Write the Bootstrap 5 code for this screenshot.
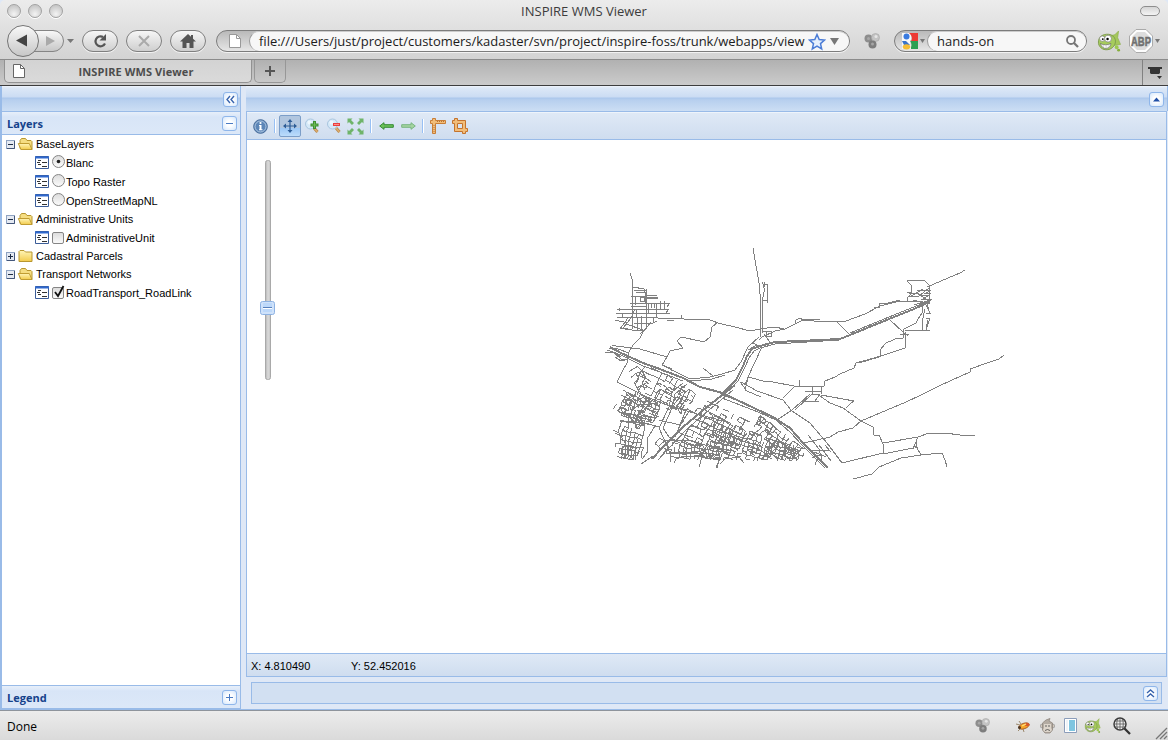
<!DOCTYPE html>
<html lang="en">
<head>
<meta charset="utf-8">
<title>INSPIRE WMS Viewer</title>
<link rel="stylesheet" href="https://cdn.jsdelivr.net/npm/bootstrap@5.3.0/dist/css/bootstrap.min.css">
<style>
html,body{height:740px;overflow:hidden}
body{font-family:"Liberation Sans",Arial,sans-serif;font-size:11px;line-height:14px;color:#000;background:#dfe8f6}
svg{display:block;flex:none}
.win{width:1168px;height:740px}
.chrome{height:60px;background:linear-gradient(#ececec,#d3d3d3);font-family:"Open Sans","Noto Sans",sans-serif;border-bottom:1px solid #8b8b8b;border-radius:5px 5px 0 0}
.titlerow{height:22px;font-size:13px;color:#3c3c3c;padding:0 8px}
.lamp{width:14px;height:14px;border-radius:50%;border:1px solid #a2a2a2;background:radial-gradient(circle at 50% 75%,#f4f4f4,#c9c9c9 75%);box-shadow:0 1px 0 #fff}
.pillbtn{width:20px;height:10px;border:1px solid #8d8d8d;border-radius:5px;background:linear-gradient(#d5d5d5,#f4f4f4)}
.navrow{height:38px;padding-left:6px}
.rbtn{width:36px;height:22px;border:1px solid #7f7f7f;border-radius:11px;background:linear-gradient(#f6f6f6,#cfcfcf);box-shadow:0 1px 0 #f2f2f2;margin-right:8px}
.field{height:22px;border:1px solid #7c7c7c;border-radius:11px;background:linear-gradient(#b9b9b9,#e6e6e6);box-shadow:0 1px 0 #f2f2f2;font-size:13px;color:#1c1c1c}
.field .inner{height:20px;border-radius:10px;background:#f7f7f7;border-left:1px solid #999;border-top:1px solid #ccc;padding-left:9px;white-space:nowrap;overflow:hidden}
.field .inner span{padding-bottom:2px}
.addr{font-size:12.980px}
.tabs{height:25px;background:linear-gradient(#b1b1b1,#cbcbcb);font-family:"Open Sans","Noto Sans",sans-serif;padding-left:4px}
.tabbox{width:248px;height:23px;background:linear-gradient(#d3d3d3,#dadada);border:1px solid #929292;border-top:0;border-radius:0 0 5px 5px;font-size:11px;font-weight:700;color:#4d4d4d;letter-spacing:.1px}
.plusbox{width:32px;height:23px;border:1px solid #979797;border-top:0;border-radius:0 0 5px 5px;margin-left:2px}
.tablist{width:26px;border-left:1px solid #818181}
.page-area{height:624px;border-bottom:1px solid #99bbe8}
.west{width:241px;border-left:2px solid #99bbe8;border-right:1px solid #99bbe8}
.strip{height:25px;background:linear-gradient(#f0f5fc 0,#dce8f7 2px,#cbdcf3 11px,#abc7ec 12px,#b7cfee 14px,#ccdef4);padding:2px 3px 0 0}
.phead{height:24px;background:linear-gradient(#e7effa,#d8e5f7 5px,#dce8f8);border-top:1px solid #99bbe8;border-bottom:1px solid #99bbe8;color:#15428b;font:bold 11px "Open Sans","Noto Sans",sans-serif;padding:1px 3px 0 5px}
.tool{width:15px;height:15px;border:1px solid #8fb6ea;border-radius:3px;background:radial-gradient(#fff 30%,#d4e6fb)}
.tree{background:#fff}
.trow{font-size:11px;height:18px;padding-left:3px;white-space:nowrap}
.trow svg+svg{margin:0 2px 0 -1px}
.leaf{height:19px;padding-left:33px}
.knob{width:13px;height:13px;border:1px solid #858585;background:linear-gradient(#ddd,#fafafa);margin:0 1px 2px 3px}
.boxy{width:12px;height:12px;border-radius:2px;margin:0 2px 0 3px}
.east{margin-left:5px;width:922px}
.mapbox{border:1px solid #99bbe8;border-bottom:0;width:921px}
.tbar{height:28px;background:linear-gradient(#dfe9f6,#cfddef);border-bottom:1px solid #99bbe8;border-top:1px solid #eef4fb;padding-left:6px}
.vsep{width:2px;height:14px;background:linear-gradient(90deg,#98c0f4 50%,#fff 50%)}
.press{width:22px;height:22px;border:1px solid #7c9ec8;border-radius:2px;background:linear-gradient(#b1c6df 58%,#9cc7f5 60%,#bcdcfb)}
.coords{height:24px;border-top:1px solid #99bbe8;border-bottom:1px solid #99bbe8;background:linear-gradient(#dfe9f6,#cfddef);padding:2px 0 0 4px;width:100%}
.foldbar{margin:5px 0 0 5px;width:911px;height:22px;border:1px solid #99bbe8;background:#d2e0f2;padding-right:3px}
.done{height:30px;background:linear-gradient(#ececec,#dadada);border-top:1px solid #8e949c;font:12px "Open Sans","Noto Sans",sans-serif;padding-left:7px}
.roads{fill:none;stroke:#808080;stroke-width:1;shape-rendering:crispEdges}
</style>
</head>
<body>
<svg width="0" height="0" class="position-absolute">
<defs>
<linearGradient id="gBtn" x2="0" y2="1"><stop stop-color="#f9f9f9"/><stop offset="1" stop-color="#c6c6c6"/></linearGradient>
<linearGradient id="gFold" x2="0" y2="1"><stop stop-color="#fff5b8"/><stop offset="1" stop-color="#f2cb4c"/></linearGradient>
<linearGradient id="gTrack"><stop stop-color="#b5b5b5"/><stop offset=".5" stop-color="#dadada"/><stop offset="1" stop-color="#c6c6c6"/></linearGradient>
<symbol id="minus" viewBox="0 0 13 18"><rect x="1.500" y="5.500" width="8" height="8" fill="#e4e9f2" stroke="#8fa3c2"/><path d="M2 13.500h7.500V6" stroke="#43567a" fill="none"/><path d="M3 9.500h5" stroke="#1e2d46" fill="none"/></symbol>
<symbol id="plus" viewBox="0 0 13 18"><use href="#minus"/><path d="M5.500 7v5" stroke="#1e2d46" fill="none"/></symbol>
<symbol id="fopen" viewBox="0 0 16 16"><path d="M2.500 12.500V4.500l1.500-2h4l1.500 2h4l1 1v8H4z" fill="#f5dd82" stroke="#b8962f"/><path d="M3.500 13.500L.8 7.500h11l2.700 6z" fill="url(#gFold)" stroke="#c09c32"/></symbol>
<symbol id="fshut" viewBox="0 0 16 16"><path d="M1.500 13.500V3.500l1-1h4l1.500 1.500h6.500v9.500z" fill="url(#gFold)" stroke="#b8962f"/></symbol>
<symbol id="layer" viewBox="0 0 14 13"><path d="M.5.5h13v12H.5z" fill="#fff" stroke="#3b5d98"/><path d="M0 1.500h14" stroke="#2f68cf" stroke-width="2"/><path d="M3 4.500h3m1 2h5M2 6.500h3M3 8.500h3m1 2h5" stroke="#333"/></symbol>
<symbol id="molecule" viewBox="0 0 16 16"><circle cx="4.500" cy="5.500" r="4" fill="#8d8d8d"/><circle cx="11.500" cy="4.500" r="4" fill="#c4c4c4" stroke="#a5a5a5" stroke-width=".6"/><circle cx="8.500" cy="11.500" r="4" fill="#7d7d7d"/><circle cx="12" cy="3.500" r="1.500" fill="#e6e6e6"/><circle cx="4.500" cy="5.500" r="1.500" fill="#a8a8a8"/><circle cx="8.500" cy="11" r="1.500" fill="#a5a5a5"/></symbol>
<symbol id="fish" viewBox="0 0 24 24"><path d="M13 6l5-1 4-4-1 7 3 7-6 1-4-1z" fill="#a5c85c" stroke="#8db04c" stroke-width=".7"/><path d="M1 14C0 6 8 3 14 5c7 3 6 12-1 15-6 2-11-1-12-6z" fill="#a6cc5c" stroke="#7f9c4f"/><path d="M3 14c3 2 8 2 11 0 0 6-9 8-11 0z" fill="#fafafa" stroke="#666" stroke-width=".7"/><path d="M6 15v3m3-2v3m3-4v3" stroke="#aaa" stroke-width=".5"/><circle cx="5" cy="9" r="2.800" fill="#fff" stroke="#777" stroke-width=".7"/><circle cx="11" cy="9" r="3.600" fill="#fff" stroke="#777" stroke-width=".7"/><circle cx="5.500" cy="9.500" r="1"/><circle cx="10.500" cy="9.500" r="1.300"/><circle cx="20" cy="18" r="2" fill="#9dca4e"/><circle cx="22" cy="21" r="1.500" fill="#86ae3c"/></symbol>
<symbol id="lens" viewBox="0 0 16 16"><path d="M9 10l3.500 4" stroke="#b98a50" stroke-width="3"/><path d="M9 10l3.500 4" stroke="#e0b070" stroke-width="1.200"/><circle cx="5.500" cy="6" r="5" fill="#d6e9f8" stroke="#a9c5de"/><circle cx="4.500" cy="4.500" r="2" fill="#eef7fd"/></symbol>
<symbol id="arrows4" viewBox="0 0 17 17"><path d="M.5 .5h5L4 2l3 3-2 2-3-3-1.500 1.500zM16.500.5v5L15 4l-3 3-2-2 3-3L11.500.5zM.5 16.500v-5L2 13l3-3 2 2-3 3 1.500 1.500zM16.500 16.500h-5L13 15l-3-3 2-2 3 3 1.500-1.500z" fill="#6fb46a"/></symbol>
</defs>
</svg>

<div class="win d-flex flex-column">
<header class="chrome">
  <div class="titlerow d-flex align-items-center">
    <div class="d-flex" style="gap:7px;margin-left:-1px"><span class="lamp"></span><span class="lamp"></span><span class="lamp"></span></div>
    <div class="flex-fill text-center" style="padding-left:2px">INSPIRE WMS Viewer</div>
    <span style="width:37px"></span><span class="pillbtn"></span>
  </div>
  <div class="navrow d-flex align-items-center">
    <svg width="76" height="34" viewBox="0 0 76 34"><path d="M20 6.500h27a10.500 10.500 0 0 1 0 21H20z" fill="url(#gBtn)" stroke="#858585"/><circle cx="17" cy="17" r="15.500" fill="url(#gBtn)" stroke="#747474"/><path d="M10 16.500l11-6v12z" fill="#444"/><path d="M40 12v10l9-5z" fill="#aaa"/><path d="M61 15h7l-3.500 4z" fill="#777"/></svg>
    <div class="rbtn d-flex justify-content-center align-items-center"><svg width="16" height="16" viewBox="0 0 16 16"><path d="M11 4A5 5 0 1 0 13 10.500" fill="none" stroke="#555" stroke-width="2.200"/><path d="M14 1v6.500H7.500z" fill="#555"/></svg></div>
    <div class="rbtn d-flex justify-content-center align-items-center"><svg width="14" height="14" viewBox="0 0 14 14"><path d="M2 2l10 10M12 2L2 12" stroke="#aaa" stroke-width="2"/></svg></div>
    <div class="rbtn d-flex justify-content-center align-items-center"><svg width="16" height="14" viewBox="0 0 16 14"><path d="M8 0L0 7.500h2.500V14h4V9h3v5h4V7.500H16l-3-2.800V1h-2v1.800z" fill="#555"/></svg></div>
    <div class="field d-flex" style="width:634px;margin-left:2px">
      <svg width="32" height="20" viewBox="0 0 32 20"><path d="M12.500 3.500h7l4 4v9h-11z" fill="#fff" stroke="#999"/><path d="M19.500 3.500v4h4" fill="none" stroke="#999"/></svg>
      <div class="inner d-flex align-items-center flex-fill"><span class="addr">file:///Users/just/project/customers/kadaster/svn/project/inspire-foss/trunk/webapps/view</span>
        <svg class="ms-auto" width="41" height="18" viewBox="0 0 41 18"><path d="M9 1.500l2.200 5 5.300.5-4 3.600 1.200 5.400L9 13.200 4.300 16l1.200-5.400-4-3.600 5.300-.5z" fill="#e6f0fd" stroke="#4c7dd6" stroke-width="1.500"/><path d="M22 5h9l-4.500 7z" fill="#777"/></svg></div>
    </div>
    <svg width="16" height="16" style="margin:0 14px"><use href="#molecule"/></svg>
    <div class="field d-flex" style="width:193px">
      <svg width="32" height="20" viewBox="0 0 32 20"><path d="M7 2h9v7H7z" fill="#f8f8f8"/><path d="M14 2h9v8h-7c2-3 1-5-2-8z" fill="#ec3a35"/><path d="M15 10h8v8h-8c2-3 2-5 0-8z" fill="#2ca053"/><path d="M7 9h8l1 9H7z" fill="#f8f8f8"/><circle cx="11.500" cy="5.500" r="3" fill="#3a7be0"/><path d="M7 10l4 0 4 4H9z" fill="#3b74c9"/><ellipse cx="11.500" cy="15.800" rx="3.800" ry="2.600" fill="#f6bd35"/><path d="M25 8h5l-2.500 4z" fill="#777"/></svg>
      <div class="inner d-flex align-items-center flex-fill"><span>hands-on</span>
        <svg class="ms-auto" width="21" height="16" viewBox="0 0 21 16"><circle cx="6" cy="6" r="4" fill="none" stroke="#777" stroke-width="1.800"/><path d="M9 9l4 4" stroke="#777" stroke-width="2.300"/></svg></div>
    </div>
    <svg width="24" height="23" style="margin:0 8px 0 10px"><use href="#fish"/></svg>
    <svg width="34" height="24" viewBox="0 0 34 24"><path d="M7 .5h10L23.500 7v10L17 23.500H7L.5 17V7z" fill="#fdfdfd" stroke="#aaa"/><path d="M8 3h8l5 5v8l-5 5H8l-5-5V8z" fill="#ddd"/><text x="2" y="16.500" font-family="Liberation Sans" font-weight="bold" font-size="12.500" fill="#707070" stroke="#707070" stroke-width=".5" textLength="20" lengthAdjust="spacingAndGlyphs">ABP</text><path d="M26 10h5l-2.500 4z" fill="#777"/></svg>
  </div>
</header>
<div class="tabs d-flex">
  <div class="tabbox d-flex align-items-center"><svg width="24" height="18" viewBox="0 0 24 18"><path d="M8.500 2.500h7l4 4v9h-11z" fill="#fff" stroke="#666"/><path d="M15.500 2.500v4h4" fill="none" stroke="#666"/></svg><span class="flex-fill text-center" style="padding:1px 8px 0 0">INSPIRE WMS Viewer</span></div>
  <div class="plusbox d-flex justify-content-center align-items-center"><svg width="12" height="12"><path d="M1 6h10M6 1v10" stroke="#555" stroke-width="2"/></svg></div>
  <div class="tablist ms-auto"><svg width="24" height="24"><path d="M5 7h14v2h-2v4l-1 1H8l-1-1V9H5z" fill="#333"/><path d="M14 16h5l-2.500 3z" fill="#333"/></svg></div>
</div>
<div style="height:1px;background:#3d3d3d"></div>

<main class="page-area d-flex">
  <aside class="west d-flex flex-column">
    <div class="strip d-flex align-items-center justify-content-end" style="padding-right:2px"><div class="tool"><svg width="13" height="13"><path d="M6 3L3 6.500 6 10M10 3L7 6.500 10 10" fill="none" stroke="#3763ad" stroke-width="1.400"/></svg></div></div>
    <div class="phead d-flex align-items-center justify-content-between"><span>Layers</span><div class="tool"><svg width="13" height="13"><path d="M3 6.500h7" stroke="#4a7bc4"/></svg></div></div>
    <div class="tree flex-fill">
      <div class="trow d-flex align-items-center"><svg width="13" height="18"><use href="#minus"/></svg><svg width="17" height="16"><use href="#fopen"/></svg><span>BaseLayers</span></div>
      <div class="trow leaf d-flex align-items-center"><svg width="14" height="13"><use href="#layer"/></svg><span class="knob rounded-circle"><svg width="11" height="11"><circle cx="5.500" cy="5.500" r="1.800" fill="#222"/></svg></span><span>Blanc</span></div>
      <div class="trow leaf d-flex align-items-center"><svg width="14" height="13"><use href="#layer"/></svg><span class="knob rounded-circle"></span><span>Topo Raster</span></div>
      <div class="trow leaf d-flex align-items-center"><svg width="14" height="13"><use href="#layer"/></svg><span class="knob rounded-circle"></span><span>OpenStreetMapNL</span></div>
      <div class="trow d-flex align-items-center"><svg width="13" height="18"><use href="#minus"/></svg><svg width="17" height="16"><use href="#fopen"/></svg><span>Administrative Units</span></div>
      <div class="trow leaf d-flex align-items-center"><svg width="14" height="13"><use href="#layer"/></svg><span class="knob boxy"></span><span>AdministrativeUnit</span></div>
      <div class="trow d-flex align-items-center"><svg width="13" height="18"><use href="#plus"/></svg><svg width="17" height="16"><use href="#fshut"/></svg><span>Cadastral Parcels</span></div>
      <div class="trow d-flex align-items-center"><svg width="13" height="18"><use href="#minus"/></svg><svg width="17" height="16"><use href="#fopen"/></svg><span>Transport Networks</span></div>
      <div class="trow leaf d-flex align-items-center"><svg width="14" height="13"><use href="#layer"/></svg><span class="knob boxy"><svg width="12" height="12" viewBox="0 0 12 12" overflow="visible"><path d="M2 4l3 4L10.500-2" fill="none" stroke="#111" stroke-width="1.800"/></svg></span><span>RoadTransport_RoadLink</span></div>
    </div>
    <div class="phead d-flex align-items-center justify-content-between"><span>Legend</span><div class="tool"><svg width="13" height="13"><path d="M3 6.500h7M6.500 3v7" stroke="#4a7bc4"/></svg></div></div>
  </aside>

  <section class="east d-flex flex-column">
    <div class="strip d-flex align-items-center justify-content-end" style="border-right:1px solid #99bbe8"><div class="tool"><svg width="13" height="13"><path d="M3 8.500l3.500-4 3.500 4z" fill="#1f4fa8"/></svg></div></div>
    <div class="mapbox d-flex flex-column">
      <div class="tbar d-flex align-items-center">
        <svg width="15" height="15" viewBox="0 0 15 15"><circle cx="7.500" cy="7.500" r="6.800" fill="#5c86b8" stroke="#456a99"/><circle cx="7.500" cy="7.500" r="5.500" fill="none" stroke="#c3d6ea" stroke-width=".8"/><path d="M6.500 6h2v5h-2zM6 6h2v1H6zM6 10.200h3.500v1H6z" fill="#fff"/><circle cx="7.500" cy="4" r="1.100" fill="#fff"/></svg>
        <div class="vsep" style="margin:0 4px 0 6px"></div>
        <div class="press d-flex align-items-center justify-content-center" style="margin-left:-1px"><svg width="14" height="14" viewBox="0 0 14 14"><path d="M7 2v10M2 7h10" stroke="#2d5c96" stroke-width="1.200"/><path d="M7 0l2.500 3h-5zM7 14l2.500-3h-5zM0 7l3-2.500v5zM14 7l-3-2.500v5z" fill="#2d5c96"/></svg></div>
        <svg width="16" height="16" viewBox="0 0 16 16" style="margin-left:4px"><use href="#lens"/><path d="M9.500 3v8M5.500 7h8" stroke="#3f8f33" stroke-width="3"/><path d="M9.500 4v6M6.500 7h6" stroke="#6cbb55" stroke-width="1"/></svg>
        <svg width="16" height="16" viewBox="0 0 16 16" style="margin-left:6px"><use href="#lens"/><path d="M6 6.500h7" stroke="#ea3f3f" stroke-width="3"/><path d="M7 6.500h5" stroke="#ff8f88"/></svg>
        <svg width="17" height="17" style="margin-left:4px"><use href="#arrows4"/></svg>
        <div class="vsep" style="margin:0 7px 0 6px"></div>
        <svg width="15" height="8" viewBox="0 0 15 8"><path d="M.7 4L5 .7v2h9.300v2.600H5v2z" fill="#6ac058" stroke="#338a32"/></svg>
        <svg width="15" height="8" viewBox="0 0 15 8" style="margin-left:7px"><path d="M14.300 4L10 .7v2H.7v2.600H10v2z" fill="#a4d4a0" stroke="#78b581"/></svg>
        <div class="vsep" style="margin:0 6px"></div>
        <svg width="16" height="16" viewBox="0 0 16 16"><path d="M2.500.5h3v2h10v3h-10v10h-3v-10h-2v-3h2z" fill="#f1bd79" stroke="#c87e37"/><path d="M7 3.500h8M4 7v8" stroke="#b87333" stroke-dasharray="1 1"/></svg>
        <svg width="16" height="16" viewBox="0 0 16 16" style="margin-left:6px"><path d="M2.500.5h3v2h8v8h2v3h-2v2h-3v-2h-8v-8h-2v-3h2zM5.500 5.500v5h5v-5z" fill="#f1bd79" stroke="#c4732d" fill-rule="evenodd"/></svg>
      </div>
      <svg width="919" height="513" viewBox="247 140 919 513" style="background:#fff">
        <rect x="265.500" y="160.500" width="5" height="219" rx="2" fill="url(#gTrack)" stroke="#a9a9a9"/>
        <rect x="260.500" y="301.500" width="14" height="13" rx="2" fill="#cfe2fa" stroke="#8db2e3"/><rect x="263" y="303" width="9" height="9" fill="#bcd8fa"/><path d="M263 307.500h9" stroke="#5680bd"/><path d="M263 308.500h9" stroke="#fff"/>
        <g class="roads" id="streets"></g>
        <g class="roads">
        <path d="M753 248L759 283 760.500 300V337M762.500 282l2 8-2 9V333M763 284.500h4.500V303M762 300.500h6M764 282v5"/>
        <path d="M640 317L670 318.700 697 319.300 710 320 719 323.300 735 327 750 331 760 329 775 327 784 329M682 315l-1 4M667 320h7"/>
        <path d="M718 322L712 327 710 337 704 342 700 341 681 337 677 341 683 348 670 351 667 357 662 365 672 369 671 371"/>
        <path d="M651 322L643 332 640 338 633 345 629 352 627 363 622 372 617 382 627 387 647 397 667 405 690 412 712 418 730 423"/>
        <path d="M612 345L616 346 640 349 667 357M605 352h8l8 5M609 348l9 1 11 4M613 352l8 7h7l-7 2-6-4"/>
        <path stroke-width="2" d="M610 347L621 353 643 363 657 368 683 378 700 387 723 393 737 400"/>
        <path d="M607 350L621 355 643 366 657 371 683 381"/>
        <path d="M663 365L672 370 690 379 710 377 722 374 735 370 741 362 748 347 759 337M690 381L712 379 725 375"/>
        <path stroke-width="2" d="M929 302L914 309 889 319 850 335 840 339 800 341 775 342 760 346 752 349 747 356 743 366 736 380 722 394"/>
        <path d="M931 300L889 317 850 333M839 340L775 344 760 348 754 351 749 358 745 367 738 381 724 395M757 345L748 350"/>
        <path d="M759 340l3-3 13-6 10-2 18-9 22 2 21-1 19-7 15-8 20-5h20l8 3M803 320l-3-2-4 2-1 4M803 319l17 1M772 331h-9M766 332v4h5v-4M764 334l8 11M753 343l6 3 11-3"/>
        <path d="M837 322L850 335M889 319L903 332 908 336M874 307h5v-3l9-1 12-3"/>
        <path d="M907 281l17-1 5 5v18M907 281l5 5-1 8-3 3-1 4M965 270l-5 3-12 5-21 9M923 289l-12 7h8l10-8M909 293h8l13 9M907 292h5M917 290h14l-5 3h5M919 295h10l-6 4h9M913 300l17 4M914 305l13-4M921 305l5-3 3 7M925 303l5 10"/>
        <path d="M922 305v8l-4 6-2 4-12 6-1 9h-6l-4 2-7 3-6 7v7M905 330h25M925 309l-3 13 1 8M926 318h4l-4 12M928 320l-2 9M926 313h5M905 332v16l-24 8-25 7-2 5-14 6-5 3-10 4-1 5M879 357l-20 6M900 334h9"/>
        <path d="M1004 355l-5 4-9 3-20 7v3l-29 13-20 10-15 7-45 19"/>
        <path d="M762 347L755 362 748 377 745 391M748 377l19 5 1-1 31 6M799 380v6h25M812 386v8l-17 16M821 386v8M748 379l-3 5M741 382l16 9 26 9 8 10M783 398l12-12M807 396l-4 5h16M812 394h8l-5 7M821 395l33 6-3 2-5 5M805 391h17"/>
        <path d="M740 382l7 9 14 6M703 368l10 8"/>
        <path stroke-width="2" d="M720 393l17 7 36 17 17 11 13 15 25 25"/>
        <path d="M722 398l36 14 18 8 14 12 13 14 22 22M777 420l15-10 18-16M792 411l18 12 17 20 15 20 41-10M803 443l14-3 13-3 8-5 15-4 8-7M811 450l19 1-5-6M808 435l11 14 3 11M814 452l12 5M819 445l12 16M812 458l10-4M815 465l3-8"/>
        <path d="M820 396l10 7 13 5 18 13 12 6 1 8h5l4 9v10l30-6M883 443l35-6 11-4h16l15 2h15M913 449l5-12M916 440l1 8 4 7M913 446l5 2M853 479l19-5 7-7 22-9 20-3 21-2 3 7 2 7"/>
        <path stroke-width="2" d="M735 385L707 407 683 427 663 447 652 459"/>
        <path d="M733 390L709 410 687 429 668 449 658 460M683 383l-11 9-3 15-10 21 4 9 7 16 1 9M687 384l-12 10-3 14-9 20 6 9 9 5"/>
        <path d="M613 430l6 3 6 10v10M615 433l8 4M620 421l25 2 14 4M655 426l-8 13 1 12-5 7"/>
        <path d="M667 405l19 5-8 20M690 410l-10 15-21-5M670 453l27-1 18-4 17 3M663 440l30 1 37 12M669 454l40-1"/>
        <path d="M674 463l2-4 8-3 18 1 17 3-3 8M702 457l-3 10M705 458l14 1-2 9M720 464l5-5 14-2 5 6M641 464l12-8"/>
        <path d="M630 273l2 6v24M633 287l11 2 1 3M634 290h12v5M636 292h9v4M631 296h14M635 297v8M646 289v40M632 303v26M633 296h12v7M640 297h4v4h-4zM646 295h11M646 297h12M646 298.500h12M646 303h24l-3 4M617 309h52l-3 4-7 1M616 313h54M617 317h40M615 320l13 3M630 303h16M631 306h15M648 303v10m3-10v5m3-5v5m2-5v14m4-16v8m4-8v8m-28 0v8h20M635 309l-4 9-8 10 9 2 12 1M628 318l-8 11M622 313v4m-3-9v3M637 317v14M641 316v15M634 323h19l4-2M648 326l-8 8M626 324l17 6M653 317v6M620 328l10 2"/>
        </g>
      </svg>
      <div class="coords d-flex align-items-center"><span style="width:100px">X: 4.810490</span><span>Y: 52.452016</span></div>
    </div>
    <div class="foldbar d-flex align-items-center justify-content-end"><div class="tool"><svg width="13" height="13"><path d="M3 6l3.500-3L10 6M3 10l3.500-3 3.500 3" fill="none" stroke="#3763ad" stroke-width="1.400"/></svg></div></div>
  </section>
</main>
<footer class="done d-flex align-items-center"><span style="padding-top:1px">Done</span>
  <svg class="ms-auto" width="15" height="15" style="margin-right:25px" viewBox="0 0 16 16"><use href="#molecule"/></svg>
  <svg width="17" height="14" viewBox="0 0 17 14" style="margin-right:8px"><path d="M1 5l4 1M4 2l2 3M3 12l3-3M9 13l-1-3" stroke="#8a7452" stroke-width=".8"/><ellipse cx="9" cy="7" rx="5.500" ry="2.700" transform="rotate(-20 9 7)" fill="#f6a52a" stroke="#a3541c" stroke-width=".8"/><ellipse cx="12" cy="5.500" rx="2.500" ry="1.500" fill="#d8552a"/><path d="M7 7l4-2" stroke="#ffe27a" stroke-width="1.300"/><circle cx="4.500" cy="8.500" r="1.500" fill="#4a3524"/></svg>
  <svg width="15" height="16" viewBox="0 0 15 16" style="margin-right:9px"><circle cx="2" cy="8" r="1.800" fill="#d3c9be" stroke="#999" stroke-width=".8"/><circle cx="13" cy="8" r="1.800" fill="#d3c9be" stroke="#999" stroke-width=".8"/><path d="M2.500 5L6 2 10 .5 9 3l3.500 2v7L10 15H5l-2.500-3z" fill="#b3aba2" stroke="#8f877e" stroke-width=".8"/><path d="M4 6h7v4l1 2-2 2H5l-2-2 1-2z" fill="#ddd5cb"/><path d="M6 7v2m3-2v2M5 12.500l2.500-1 2.500 1" stroke="#555" stroke-width=".9" fill="none"/></svg>
  <svg width="13" height="15" viewBox="0 0 13 15" style="margin-right:7px"><path d="M.5.500h12v14H.5z" fill="#fff" stroke="#8b9dba"/><path d="M5 2h6v11H5z" fill="#7fc5e0"/><path d="M2 2h2v11H2z" fill="#eef3f8"/></svg>
  <svg width="17" height="16" style="margin-right:12px" viewBox="0 0 24 24"><use href="#fish"/></svg>
  <svg width="18" height="18" viewBox="0 0 18 18" style="margin-right:24px"><path d="M11 11l6 6" stroke="#333" stroke-width="2.300"/><circle cx="7" cy="7" r="6" fill="#eee" stroke="#3c3c3c" stroke-width="1.500"/><path d="M1 7h12M7 1v12M2 4h10M2 10h10M4.500 2c-1 3-1 7 0 10M9.500 2c1 3 1 7 0 10" fill="none" stroke="#555" stroke-width=".8"/></svg>
  <svg width="13" height="13" class="align-self-end"><path d="M1 12L12 1M5 12l7-7M9 12l3-3" stroke="#777" stroke-width="1.300"/></svg>
</footer>
</div>
<script src="https://cdn.jsdelivr.net/npm/bootstrap@5.3.0/dist/js/bootstrap.bundle.min.js"></script>
<script>
// Street blocks of the built-up districts: corner, rotation, columns, rows, block size, fill rate
const districts = [
  [625,386,28,7,5,6,5,.65],[622,402,-30,6,5,4,6,.6],[627,392,24,9,6,4,3.5,.65],
  [621,421,12,6,9,4,4.5,.75],[622,446,5,6,4,3.5,4,.85],[622,408,10,6,3,4,4,.6],
  [628,372,-30,2,4,6,6,.5],[645,365,26,6,3,6,6,.5],[641,374,26,7,4,6,5,.42],[665,380,30,4,4,6,5,.5],[683,386,32,5,6,3,4,.75],
  [707,401,26,8,5,6,5,.7],[690,404,24,7,6,8,6,.4],[715,416,28,9,4,4,5,.75],
  [668,442,6,13,4,4,3.5,.7],[690,425,25,8,5,6,4.5,.6],[714,430,14,14,7,4.2,4,.75],
  [762,417,38,10,5,5,4,.72],[750,431,22,12,6,4.5,3.5,.75],[770,440,14,9,4,4,4,.75],[655,444,-45,2,3,4,4,.7],[755,424,-55,3,5,3,4,.65]
];
let seed = 7;
const rnd = () => (seed = (seed * 16807) % 2147483647) / 2147483647;
let d = '';
for (const [x, y, deg, cols, rows, w, h, rate] of districts) {
  const a = deg * Math.PI / 180, pts = [];
  for (let r = 0; r <= rows; r++) for (let c = 0; c <= cols; c++) {
    const u = c * w + rnd() * 2 - 1, v = r * h + rnd() * 1.6 - .8;
    pts.push([x + u * Math.cos(a) - v * Math.sin(a), y + u * Math.sin(a) + v * Math.cos(a)].map(n => n.toFixed(1)));
  }
  const n = cols + 1;
  for (let i = 0; i < pts.length; i++) {
    if (+pts[i][1] > 459 || +pts[i][0] > 804 || +pts[i][0] < 616) continue;
    if (i % n < cols && rnd() < rate) d += `M${pts[i]}L${pts[i + 1]}`;
    if (i + n < pts.length && +pts[i + n][1] < 461 && rnd() < rate) d += `M${pts[i]}L${pts[i + n]}`;
  }
}
document.getElementById('streets').innerHTML = `<path d="${d}"/>`;
</script>
</body>
</html>
